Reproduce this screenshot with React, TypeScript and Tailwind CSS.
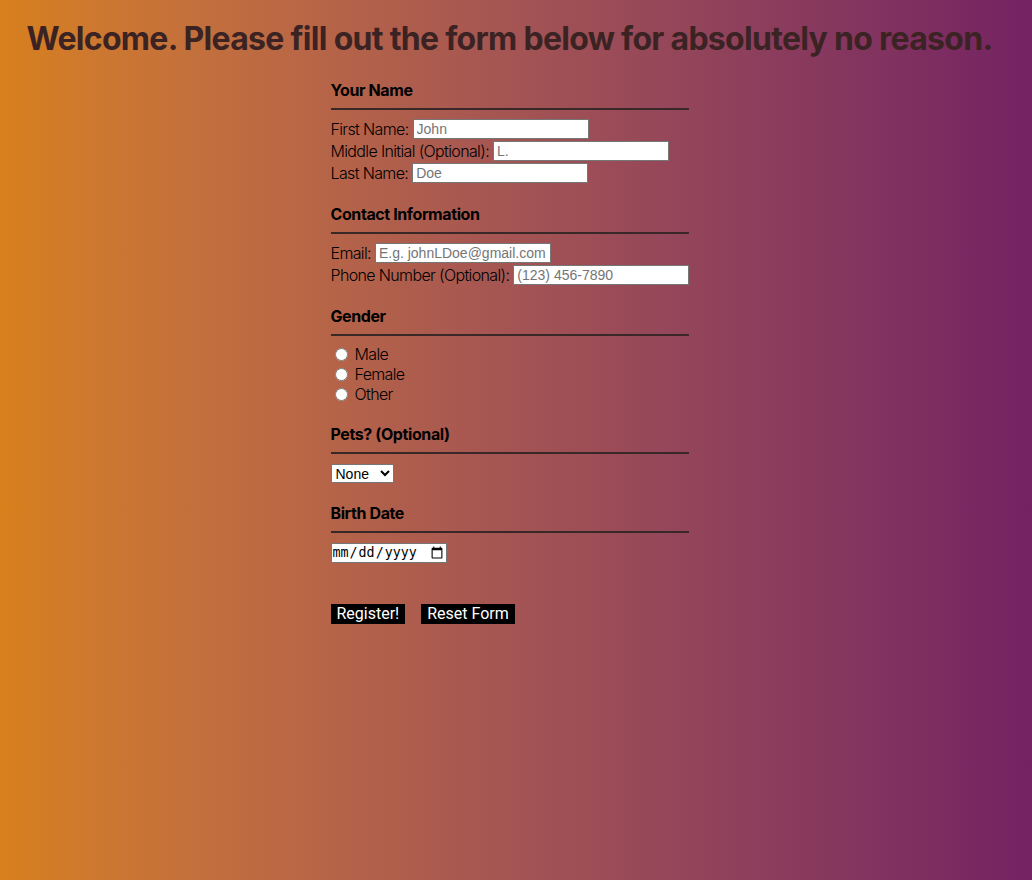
const inputCls =
  "h-[20px] w-[176px] border border-[#767676] bg-white px-[3px] text-[14px] tracking-normal text-black placeholder:text-[#757575] font-['Liberation_Sans',Arial,sans-serif] outline-none";

const Section = ({ title, children }: { title: string; children: React.ReactNode }) => (
  <section className="mb-[20px]">
    <h2 className="text-[16px] font-bold leading-[20px] tracking-tight text-black">{title}</h2>
    <hr className="mt-[8px] mb-[8px] border-0 border-t-2 border-[#3a2727]" />
    {children}
  </section>
);

const Row = ({ label, placeholder, type = "text" }: { label: string; placeholder: string; type?: string }) => (
  <div className="flex h-[22px] items-center whitespace-nowrap">
    <label className="mr-[4px]">{label}</label>
    <input type={type} placeholder={placeholder} className={inputCls} />
  </div>
);

const Radio = ({ label }: { label: string }) => (
  <label className="flex h-[20px] items-center">
    <input type="radio" name="gender" className="ml-[4px] mr-[7px] h-[13px] w-[13px] accent-white" />
    {label}
  </label>
);

export default function App() {
  return (
    <div className="min-h-[880px] w-full bg-gradient-to-r from-[#d7801c] to-[#742262] pr-[13px] font-['Inter',sans-serif] text-black">
      <h1 className="pt-[18px] text-center text-[32px] font-bold leading-[42px] tracking-[-0.022em] text-[#3b2324]">
        Welcome. Please fill out the form below for absolutely no reason.
      </h1>
      <form className="mx-auto mt-[20px] w-[358px] text-[16px] font-light leading-[20px] tracking-[-0.04em]">
        <Section title="Your Name">
          <Row label="First Name:" placeholder="John" />
          <Row label="Middle Initial (Optional):" placeholder="L." />
          <Row label="Last Name:" placeholder="Doe" />
        </Section>
        <Section title="Contact Information">
          <Row label="Email:" placeholder="E.g. johnLDoe@gmail.com" type="email" />
          <Row label="Phone Number (Optional):" placeholder="(123) 456-7890" type="tel" />
        </Section>
        <Section title="Gender">
          <Radio label="Male" />
          <Radio label="Female" />
          <Radio label="Other" />
        </Section>
        <Section title="Pets? (Optional)">
          <select className="mt-[2px] h-[19px] w-[63px] border border-[#767676] bg-white text-[14px] tracking-normal text-black font-['Liberation_Sans',Arial,sans-serif]">
            <option>None</option>
            <option>Dog</option>
            <option>Cat</option>
            <option>Other</option>
          </select>
        </Section>
        <Section title="Birth Date">
          <input
            type="date"
            className="mt-[1px] h-[20px] w-[116px] border border-[#767676] bg-white text-[13.33px] tracking-normal text-black font-['DejaVu_Sans_Mono',monospace]"
          />
        </Section>
        <div className="mt-[41px] flex gap-[16px] font-['Roboto',sans-serif] font-normal tracking-normal">
          <button type="submit" className="h-[20px] bg-black px-[6px] text-[16px] leading-[20px] text-white">
            Register!
          </button>
          <button type="reset" className="h-[20px] bg-black px-[6px] text-[16px] leading-[20px] text-white">
            Reset Form
          </button>
        </div>
      </form>
    </div>
  );
}
